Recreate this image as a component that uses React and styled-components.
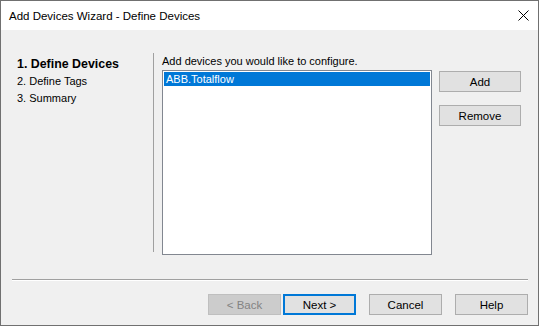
import React from 'react';
import styled, { createGlobalStyle } from 'styled-components';

const GlobalStyle = createGlobalStyle`
  html, body {
    margin: 0;
    padding: 0;
    background: #ffffff;
  }
  * {
    box-sizing: border-box;
  }
`;

const Window = styled.div`
  width: 539px;
  height: 326px;
  border: 1px solid #707070;
  display: flex;
  flex-direction: column;
  font-family: "Liberation Sans", Arial, sans-serif;
  font-size: 11px;
  color: #000000;
  background: #f0f0f0;
`;

const TitleBar = styled.div`
  height: 29px;
  flex: none;
  background: #ffffff;
  display: flex;
  align-items: center;
  justify-content: space-between;
  padding: 0 9px 0 8px;
  font-size: 11.5px;
`;

const Body = styled.div`
  flex: 1;
  display: flex;
  flex-direction: column;
  padding-top: 23px;
`;

const Content = styled.div`
  display: flex;
  height: 202px;
`;

const Steps = styled.ul`
  list-style: none;
  margin: 0;
  padding: 3px 0 0 16px;
  width: 152px;
`;

const Step = styled.li`
  line-height: 17px;
  font-size: ${(p) => (p.active ? '12.4px' : '11px')};
  font-weight: ${(p) => (p.active ? 'bold' : 'normal')};
`;

const VSeparator = styled.div`
  width: 1px;
  height: 199px;
  background: #a0a0a0;
  margin-right: 8px;
`;

const Panel = styled.div`
  display: flex;
  flex-direction: column;
`;

const Prompt = styled.div`
  line-height: 15px;
  margin: 1px 0 1px;
`;

const PanelRow = styled.div`
  display: flex;
  gap: 7px;
`;

const ListBox = styled.div`
  width: 270px;
  height: 185px;
  background: #ffffff;
  border: 1px solid #828790;
  padding: 1px;
`;

const ListItem = styled.div`
  height: 14px;
  line-height: 14px;
  padding-left: 2px;
  background: ${(p) => (p.selected ? '#0078d7' : 'transparent')};
  color: ${(p) => (p.selected ? '#ffffff' : '#000000')};
`;

const SideButtons = styled.div`
  display: flex;
  flex-direction: column;
  gap: 13px;
  padding-top: 1px;
`;

const Button = styled.button`
  font-family: inherit;
  font-size: 11.5px;
  width: ${(p) => p.w || 73}px;
  height: 21px;
  padding: 0;
  background: ${(p) => (p.disabled ? '#cccccc' : '#e1e1e1')};
  color: ${(p) => (p.disabled ? '#838383' : '#000000')};
  border: ${(p) => (p.primary ? '2px solid #0078d7' : p.disabled ? '1px solid #bfbfbf' : '1px solid #adadad')};
  border-radius: 0;
  outline: none;
`;

const HSeparator = styled.div`
  margin: 24px 10px 0 11px;
  height: 2px;
  border-top: 1px solid #a0a0a0;
  border-bottom: 1px solid #ffffff;
`;

const Footer = styled.div`
  display: flex;
  justify-content: flex-end;
  padding: 13px 10px 0 0;
`;

const ButtonPair = styled.div`
  display: flex;
  gap: 2px;
  margin-right: 13px;
`;

const FooterGroup = styled.div`
  display: flex;
  gap: 13px;
`;

function CloseIcon() {
  return (
    <svg width="11" height="11" viewBox="0 0 11 11">
      <path d="M0.5 0.5 L10.5 10.5 M10.5 0.5 L0.5 10.5" stroke="#000" strokeWidth="1" fill="none" />
    </svg>
  );
}

export default function App() {
  return (
    <>
      <GlobalStyle />
      <Window>
        <TitleBar>
          <span>Add Devices Wizard - Define Devices</span>
          <CloseIcon />
        </TitleBar>
        <Body>
          <Content>
            <Steps>
              <Step active>1. Define Devices</Step>
              <Step>2. Define Tags</Step>
              <Step>3. Summary</Step>
            </Steps>
            <VSeparator />
            <Panel>
              <Prompt>Add devices you would like to configure.</Prompt>
              <PanelRow>
                <ListBox>
                  <ListItem selected>ABB.Totalflow</ListItem>
                </ListBox>
                <SideButtons>
                  <Button w={82}>Add</Button>
                  <Button w={82}>Remove</Button>
                </SideButtons>
              </PanelRow>
            </Panel>
          </Content>
          <HSeparator />
          <Footer>
            <ButtonPair>
              <Button disabled>&lt; Back</Button>
              <Button primary>Next &gt;</Button>
            </ButtonPair>
            <FooterGroup>
              <Button>Cancel</Button>
              <Button>Help</Button>
            </FooterGroup>
          </Footer>
        </Body>
      </Window>
    </>
  );
}
